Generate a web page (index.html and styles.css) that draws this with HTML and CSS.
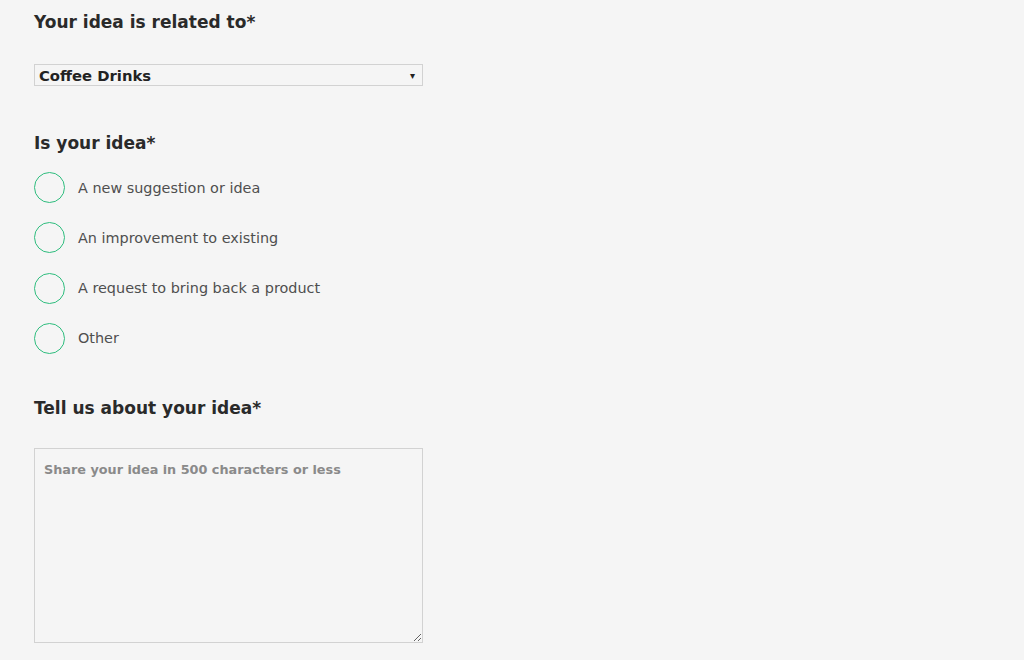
FILE: index.html
```html
<!DOCTYPE html>
<html>
<head>
    <meta charset="UTF-8">
    <title>Share your idea</title>
    <link rel="stylesheet" href="styles.css">
</head>
<body>
<form class="idea-form">
    <!-- Category select -->
    <div class="field">
        <h2 class="field-label">Your idea is related to*</h2>
        <div class="select-box">
            <span class="select-value">Coffee Drinks</span>
            <span class="select-arrow">&#9662;</span>
        </div>
    </div>

    <!-- Idea type -->
    <div class="field field-type">
        <h2 class="field-label">Is your idea*</h2>
        <div class="radio-list">
            <label class="radio-row"><span class="radio-circle"></span>A new suggestion or idea</label>
            <label class="radio-row"><span class="radio-circle"></span>An improvement to existing</label>
            <label class="radio-row"><span class="radio-circle"></span>A request to bring back a product</label>
            <label class="radio-row"><span class="radio-circle"></span>Other</label>
        </div>
    </div>

    <!-- Description -->
    <div class="field field-text">
        <h2 class="field-label">Tell us about your idea*</h2>
        <textarea class="idea-text" placeholder="Share your idea in 500 characters or less"></textarea>
    </div>
</form>
</body>
</html>
```

FILE: styles.css
```css
html, body {
    margin: 0;
    height: 100%;
    overflow: hidden;
}

body {
    background-color: #f5f5f5;
    font-family: "DejaVu Sans", "Liberation Sans", sans-serif;
    color: #333;
}

.idea-form {
    padding: 9px 34px 0 34px;
    width: 389px;
}

.field-label {
    margin: 0;
    font-size: 17px;
    font-weight: 700;
    color: #2a2a2a;
    line-height: 26px;
}

/* Select */
.select-box {
    margin-top: 29px;
    height: 20px;
    border: 1px solid #d2d2d2;
    display: flex;
    align-items: center;
    justify-content: space-between;
    padding: 0 7px 0 4px;
}

.select-value {
    font-size: 14.8px;
    font-weight: 700;
    color: #222;
}

.select-arrow {
    font-size: 10px;
    color: #222;
}

.field-type {
    margin-top: 44px;
}

.field-text {
    margin-top: 41px;
}

/* Radios */
.radio-list {
    margin-top: 16px;
    display: flex;
    flex-direction: column;
    gap: 19.3px;
}

.radio-row {
    display: flex;
    align-items: center;
    gap: 13px;
    font-size: 14.4px;
    color: #4f4f4f;
    height: 31px;
}

.radio-circle {
    width: 29px;
    height: 29px;
    border: 1.5px solid #2ebd7e;
    border-radius: 50%;
    flex: none;
}

/* Textarea */
.idea-text {
    display: block;
    margin-top: 27px;
    width: 389px;
    height: 195px;
    box-sizing: border-box;
    border: 1px solid #d2d2d2;
    background: #f5f5f5;
    padding: 13px 9px;
    font-family: "DejaVu Sans", "Liberation Sans", sans-serif;
    font-size: 12.8px;
    font-weight: 700;
}

.idea-text::placeholder {
    color: #8a8a8a;
}
```
